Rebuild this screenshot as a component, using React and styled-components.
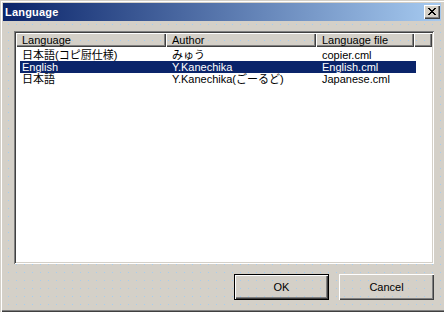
import React from 'react';
import styled, { createGlobalStyle } from 'styled-components';

const GlobalStyle = createGlobalStyle`
  html, body {
    margin: 0;
    padding: 0;
    background: #d4d0c8;
  }
  * {
    box-sizing: border-box;
  }
`;

const Window = styled.div`
  width: 444px;
  height: 312px;
  display: flex;
  flex-direction: column;
  padding: 3px 3px 2px 3px;
  background-color: #d4d0c8;
  background-image: conic-gradient(at 1px 1px, transparent 75%, #a4cdf0 0);
  background-size: 8px 8px;
  box-shadow: inset 1px 1px #d4d0c8, inset 2px 2px #ffffff, inset 0 -1px #404040, inset 0 -2px #808080;
  font-family: "Liberation Sans", "Noto Sans CJK JP", sans-serif;
  font-size: 11px;
  color: #000;
  overflow: hidden;
`;

const TitleBar = styled.div`
  height: 18px;
  display: flex;
  align-items: center;
  justify-content: space-between;
  padding: 0 1px 0 2px;
  background: linear-gradient(to right, #0a246a, #a6caf0);
`;

const Title = styled.span`
  color: #fff;
  font-weight: bold;
  font-size: 11px;
  line-height: 18px;
  letter-spacing: 0.2px;
`;

const CloseButton = styled.div`
  width: 16px;
  height: 14px;
  display: flex;
  align-items: center;
  justify-content: center;
  padding: 0 0 1px 0;
  background: #d4d0c8;
  box-shadow: inset 1px 1px #fff, inset -1px -1px #404040, inset -2px -2px #808080;
`;

const Body = styled.div`
  flex: 1;
  display: flex;
  flex-direction: column;
  padding: 10px 7px 10px 11px;
  gap: 10px;
`;

const ListBox = styled.div`
  flex: 1;
  display: flex;
  flex-direction: column;
  padding: 2px;
  box-shadow: inset 1px 1px #808080, inset -1px -1px #ffffff, inset 2px 2px #404040, inset -2px -2px #d4d0c8;
`;

const Header = styled.div`
  height: 14px;
  display: flex;
`;

const HeaderCell = styled.div`
  width: ${(p) => (p.$w ? `${p.$w}px` : 'auto')};
  flex: ${(p) => (p.$w ? 'none' : '1')};
  height: 14px;
  line-height: 14px;
  padding-left: 6px;
  white-space: nowrap;
  box-shadow: inset 1px 1px #ffffff, inset -1px -1px #404040, inset -2px -2px #808080;
`;

const Rows = styled.div`
  flex: 1;
  background: #fff;
  padding-top: 2px;
`;

const Row = styled.div`
  display: flex;
  height: 12px;
  line-height: 12px;
  margin-left: 4px;
  width: 396px;
  background: ${(p) => (p.$selected ? '#0a246a' : 'transparent')};
  color: ${(p) => (p.$selected ? '#fff' : '#000')};
`;

const Cell = styled.div`
  width: ${(p) => p.$w}px;
  padding-left: ${(p) => p.$pad}px;
  white-space: nowrap;
  overflow: hidden;
`;

const ButtonRow = styled.div`
  height: 26px;
  display: flex;
  justify-content: flex-end;
  gap: 10px;
`;

const Button = styled.div`
  width: 95px;
  height: 26px;
  display: flex;
  align-items: center;
  justify-content: center;
  font-size: 11px;
  border: ${(p) => (p.$default ? '1px solid #000' : 'none')};
  box-shadow: inset 1px 1px #fff, inset -1px -1px #404040, inset -2px -2px #808080;
`;

const rows = [
  { lang: '日本語(コピ厨仕様)', author: 'みゅう', file: 'copier.cml' },
  { lang: 'English', author: 'Y.Kanechika', file: 'English.cml', selected: true },
  { lang: '日本語', author: 'Y.Kanechika(ごーるど)', file: 'Japanese.cml' },
];

function CloseIcon() {
  return (
    <svg width="8" height="7" viewBox="0 0 8 7" shapeRendering="crispEdges">
      <path
        fill="#000"
        d="M0 0h2v1H0z M6 0h2v1H6z M1 1h2v1H1z M5 1h2v1H5z M2 2h4v1H2z M3 3h2v1H3z M2 4h4v1H2z M1 5h2v1H1z M5 5h2v1H5z M0 6h2v1H0z M6 6h2v1H6z"
      />
    </svg>
  );
}

export default function App() {
  return (
    <>
      <GlobalStyle />
      <Window>
        <TitleBar>
          <Title>Language</Title>
          <CloseButton>
            <CloseIcon />
          </CloseButton>
        </TitleBar>
        <Body>
          <ListBox>
            <Header>
              <HeaderCell $w={150}>Language</HeaderCell>
              <HeaderCell $w={150}>Author</HeaderCell>
              <HeaderCell $w={98}>Language file</HeaderCell>
              <HeaderCell />
            </Header>
            <Rows>
              {rows.map((r) => (
                <Row key={r.file} $selected={r.selected}>
                  <Cell $w={146} $pad={2}>{r.lang}</Cell>
                  <Cell $w={150} $pad={6}>{r.author}</Cell>
                  <Cell $w={100} $pad={6}>{r.file}</Cell>
                </Row>
              ))}
            </Rows>
          </ListBox>
          <ButtonRow>
            <Button $default>OK</Button>
            <Button>Cancel</Button>
          </ButtonRow>
        </Body>
      </Window>
    </>
  );
}
